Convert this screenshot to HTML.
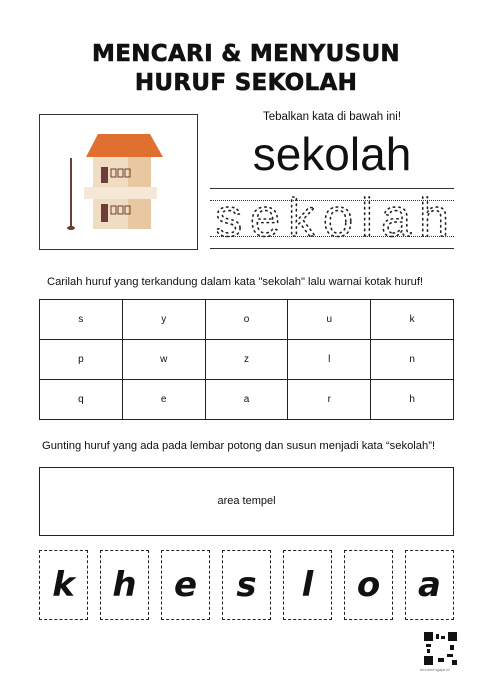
<!DOCTYPE html>
<html><head><meta charset="utf-8"><style>
body{margin:0;width:492px;height:691px;background:#fff;position:relative;overflow:hidden;font-family:"Liberation Sans",sans-serif;color:#111}
.a{position:absolute}
h1{position:absolute;left:0;width:492px;top:40px;margin:0;text-align:center;font:bold 23px/29px "DejaVu Sans","Liberation Sans",sans-serif;letter-spacing:0.3px;-webkit-text-stroke:0.6px #111}
table{position:absolute;left:39px;top:299px;width:415px;border-collapse:collapse;table-layout:fixed}
td{border:1.5px solid #222;text-align:center;font-size:10px;height:39px;padding:0;line-height:10px}
.card{position:absolute;top:550px;width:47px;height:68px;border:1.5px dashed #222;text-align:center;font:italic 900 34px/68px "DejaVu Sans",sans-serif}
</style></head><body>
<h1>MENCARI &amp; MENYUSUN<br>HURUF SEKOLAH</h1>
<div class="a" style="left:39px;top:114px;width:157px;height:134px;border:1.5px solid #333"></div>
<svg class="a" style="left:40px;top:115px" width="157" height="134">
<line x1="31" y1="43" x2="31" y2="112" stroke="#6b3e3a" stroke-width="2"/>
<ellipse cx="31" cy="113" rx="4" ry="2" fill="#6b3e3a"/>
<polygon points="46,42 58,19 110,19 123,42" fill="#e07030"/>
<rect x="53" y="42" width="58" height="72" fill="#f0dcc0"/>
<rect x="88" y="42" width="23" height="72" fill="#e8c8a0"/>
<rect x="44" y="72" width="73" height="12" fill="#f6e8d6"/>
<rect x="61" y="52" width="7" height="16" fill="#6b3e3a"/><rect x="71" y="54" width="5" height="8" fill="none" stroke="#6b3e3a"/><rect x="78" y="54" width="5" height="8" fill="none" stroke="#6b3e3a"/><rect x="85" y="54" width="5" height="8" fill="none" stroke="#6b3e3a"/>
<rect x="61" y="89" width="7" height="18" fill="#6b3e3a"/><rect x="71" y="91" width="5" height="8" fill="none" stroke="#6b3e3a"/><rect x="78" y="91" width="5" height="8" fill="none" stroke="#6b3e3a"/><rect x="85" y="91" width="5" height="8" fill="none" stroke="#6b3e3a"/>
</svg>
<div class="a" style="left:210px;top:111px;width:244px;text-align:center;font-size:11.5px">Tebalkan kata di bawah ini!</div>
<div class="a" style="left:210px;top:126px;width:244px;text-align:center;font-size:46px;line-height:56px">sekolah</div>
<div class="a" style="left:210px;top:188px;width:244px;border-top:1px solid #333"></div>
<div class="a" style="left:210px;top:200px;width:244px;border-top:1px dotted #333"></div>
<div class="a" style="left:210px;top:236px;width:244px;border-top:1px dotted #333"></div>
<div class="a" style="left:210px;top:248px;width:244px;border-top:1px solid #333"></div>
<svg class="a" style="left:210px;top:186px" width="244" height="60"><text x="122" y="50" text-anchor="middle" font-family="Liberation Sans" font-size="54" fill="none" stroke="#222" stroke-width="1.6" stroke-dasharray="1.4 4" stroke-linecap="round" textLength="234" lengthAdjust="spacing">sekolah</text></svg>
<div class="a" style="left:47px;top:276px;font-size:11.2px">Carilah huruf yang terkandung dalam kata "sekolah" lalu warnai kotak huruf!</div>
<table><tr><td>s</td><td>y</td><td>o</td><td>u</td><td>k</td></tr><tr><td>p</td><td>w</td><td>z</td><td>l</td><td>n</td></tr><tr><td>q</td><td>e</td><td>a</td><td>r</td><td>h</td></tr></table>
<div class="a" style="left:42px;top:440px;font-size:11.2px">Gunting huruf yang ada pada lembar potong dan susun menjadi kata “sekolah”!</div>
<div class="a" style="left:39px;top:467px;width:413px;height:67px;border:1.5px solid #222;text-align:center;font-size:11px;line-height:67px">area tempel</div>
<div class="card" style="left:39px">k</div><div class="card" style="left:100px">h</div><div class="card" style="left:161px">e</div><div class="card" style="left:222px">s</div><div class="card" style="left:283px">l</div><div class="card" style="left:344px">o</div><div class="card" style="left:405px">a</div>
<svg class="a" style="left:424px;top:632px" width="33" height="33"><rect width="33" height="33" fill="#fff"/><g fill="#111"><rect x="0" y="0" width="9" height="9"/><rect x="24" y="0" width="9" height="9"/><rect x="0" y="24" width="9" height="9"/><rect x="12" y="2" width="3" height="5"/><rect x="17" y="4" width="4" height="3"/><rect x="2" y="12" width="5" height="3"/><rect x="26" y="13" width="4" height="5"/><rect x="23" y="22" width="6" height="3"/><rect x="14" y="26" width="6" height="4"/><rect x="28" y="28" width="5" height="5"/><rect x="3" y="17" width="3" height="4"/></g><rect x="11" y="11" width="11" height="11" fill="#fff"/></svg>
<div class="a" style="left:420px;top:667px;font-size:4px;color:#777">tenutmengajar.id</div>
</body></html>
